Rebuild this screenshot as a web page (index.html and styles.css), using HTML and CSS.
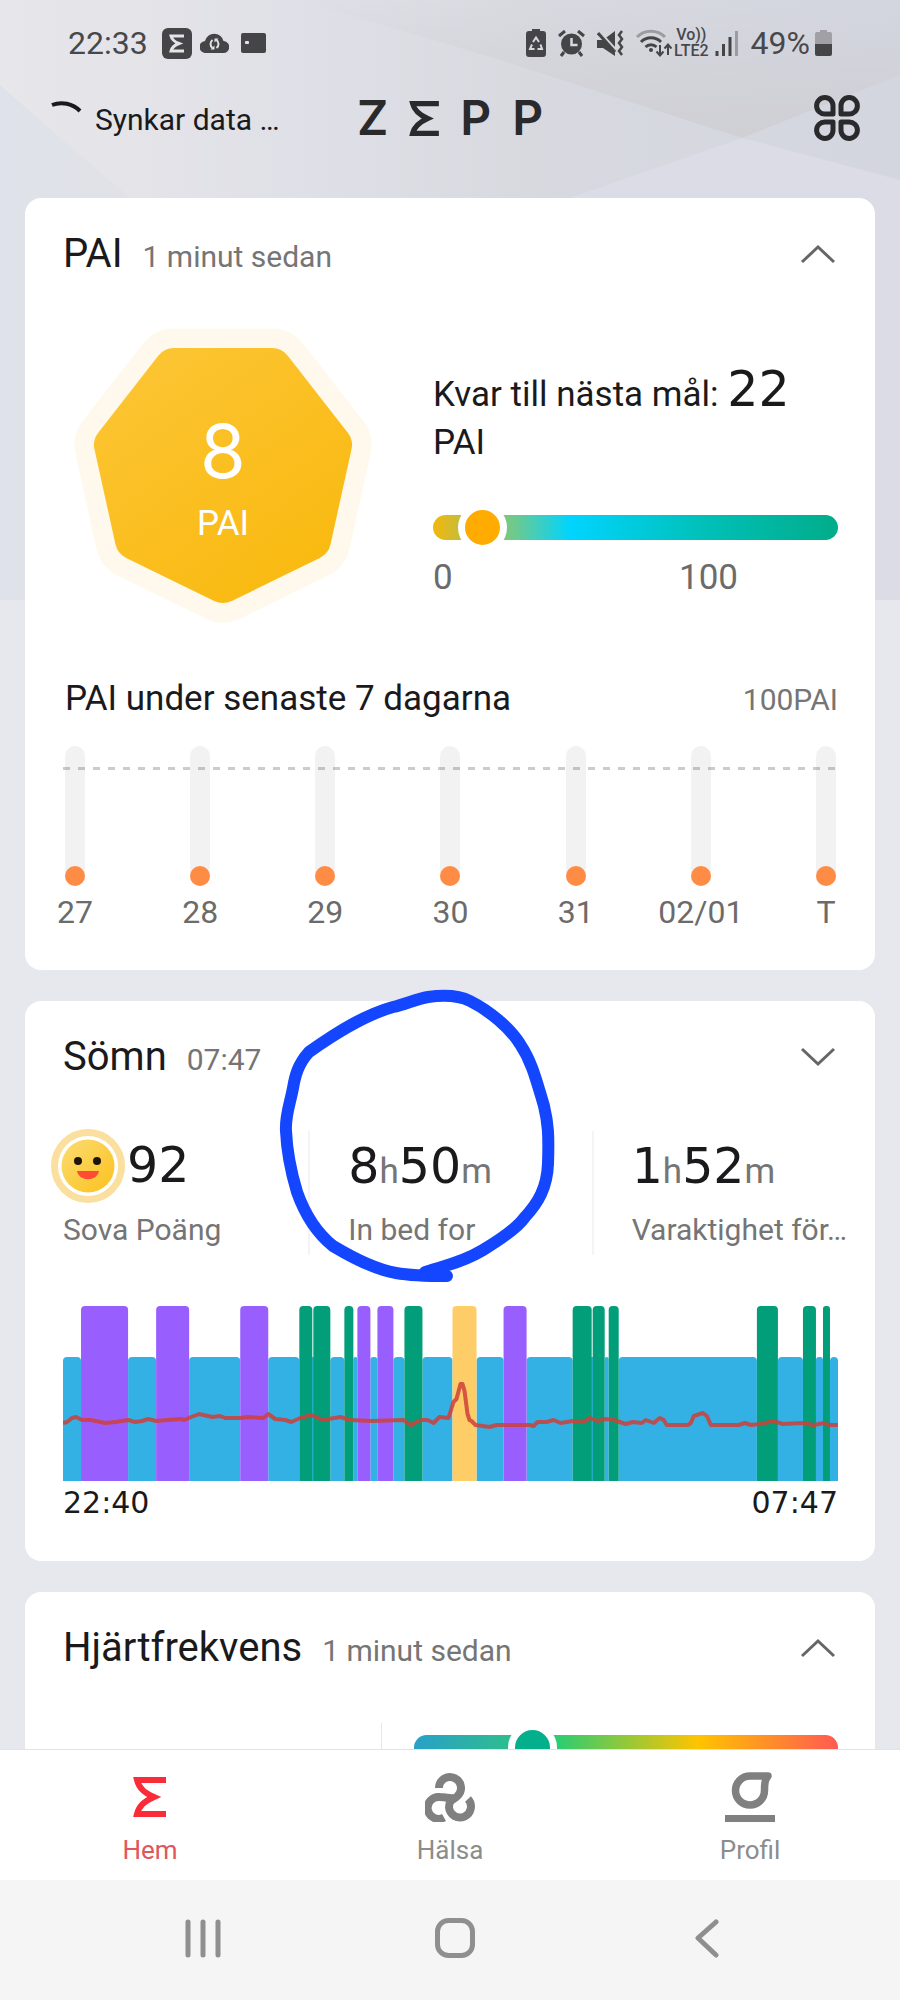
FILE: index.html
```
<!DOCTYPE html>
<html lang="sv">
<head>
    <meta charset="UTF-8">
    <meta name="viewport" content="width=device-width, initial-scale=1.0">
    <title>Zepp</title>
    <link rel="stylesheet" href="styles.css">
</head>
<body>
    <svg class="backdrop" viewBox="0 0 900 600" preserveAspectRatio="none" aria-hidden="true">
        <defs>
            <linearGradient id="sky" x1="0" y1="0" x2="1" y2="0">
                <stop offset="0" stop-color="#e7e7ea"/>
                <stop offset="0.35" stop-color="#dfdfe7"/>
                <stop offset="0.6" stop-color="#d8d9df"/>
                <stop offset="1" stop-color="#d3d6df"/>
            </linearGradient>
            <linearGradient id="shade" x1="0" y1="0" x2="0" y2="1">
                <stop offset="0" stop-color="#cfcfd4" stop-opacity="0"/>
                <stop offset="1" stop-color="#cfcfd4"/>
            </linearGradient>
            <linearGradient id="side" x1="0" y1="0" x2="1" y2="0">
                <stop offset="0" stop-color="#dfe2ea"/>
                <stop offset="1" stop-color="#e1e2e8"/>
            </linearGradient>
        </defs>
        <rect width="900" height="600" fill="url(#sky)"/>
        <polygon points="0,85 130,198 130,600 0,600" fill="url(#side)"/>
        <polygon points="300,0 900,0 900,75 742,138 500,60" fill="url(#shade)"/>
        <polygon points="742,138 900,180 900,600 570,600 570,198" fill="#dcdce7"/>
    </svg>

    <div class="status-bar">
        <div class="status-group">
            <span class="clock">22:33</span>
            <svg class="icon-app" width="30" height="31" viewBox="0 0 30 31">
                <rect width="30" height="31" rx="6" fill="#454548"/>
                <path d="M22 8H9c1 4 4 6 8 7.500c-4 1.500-7 3.500-8 7.500h13" fill="none" stroke="#e3e3e8" stroke-width="3"/>
            </svg>
            <svg width="29" height="20" viewBox="0 0 29 20">
                <path d="M6 20a6 6 0 0 1-1-12a9.500 9.500 0 0 1 18.500 0a6 6 0 0 1-.5 12z" fill="#454548"/>
                <path d="M12.500 7a5 5 0 0 0 0 8M16.500 7a5 5 0 0 1 0 8" fill="none" stroke="#e3e3e8" stroke-width="2"/>
                <path d="M10.500 16.500h4v-4zM18.500 5.500h-4v4z" fill="#e3e3e8"/>
            </svg>
            <svg class="icon-card" width="25" height="20" viewBox="0 0 25 20">
                <rect width="25" height="20" rx="2" fill="#454548"/>
                <rect x="4" y="8" width="4" height="3" rx="1" fill="#e3e3e8"/>
            </svg>
        </div>
        <div class="status-group status-right">
            <svg width="20" height="28" viewBox="0 0 20 28">
                <path d="M6 0h8v2h3a3 3 0 0 1 3 3v20a3 3 0 0 1-3 3H3a3 3 0 0 1-3-3V5a3 3 0 0 1 3-3h3z" fill="#454548"/>
                <path d="M7 13l3-4.500l3 4.500M14.500 15.500l1.500 4.500h-4.500M8.500 20H4l2-4.500" fill="none" stroke="#d8d9de" stroke-width="2"/>
            </svg>
            <svg width="27" height="27" viewBox="0 0 27 27">
                <circle cx="13.500" cy="14" r="10.500" fill="#454548"/>
                <path d="M1 6l6-5M26 6l-6-5M6 22l-3 4M21 22l3 4" stroke="#454548" stroke-width="3"/>
                <path d="M13.500 8v7h6" fill="none" stroke="#d8d9de" stroke-width="2.500"/>
            </svg>
            <svg width="27" height="27" viewBox="0 0 27 27">
                <path d="M0 10h6L18 1v25L6 18H0z" fill="#454548"/>
                <path d="M0 0l20 22" stroke="#d4d5da" stroke-width="4"/>
                <path d="M1 3l17 19" stroke="#454548" stroke-width="3"/>
                <path d="M25 1l-3 4l3 4l-3 4l3 4l-3 4l3 4" fill="none" stroke="#454548" stroke-width="2.500"/>
            </svg>
            <svg width="36" height="28" viewBox="0 0 36 28">
                <path d="M1 8a20 20 0 0 1 28 0" fill="none" stroke="#9b9ba0" stroke-width="3"/>
                <path d="M5 13a14 14 0 0 1 20 0M9.500 18a8 8 0 0 1 11 0" fill="none" stroke="#454548" stroke-width="3"/>
                <circle cx="15" cy="21" r="2" fill="#454548"/>
                <path d="M24 16v10M20.500 22.500l3.500 4l3.500-4M32 26V16M28.500 19.500l3.500-4l3.500 4" fill="none" stroke="#454548" stroke-width="2"/>
            </svg>
            <span class="volte"><span>Vo))</span><span>LTE2</span></span>
            <svg class="icon-signal" width="24" height="25" viewBox="0 0 24 25">
                <path d="M2 25v-5M8.500 25V13M15 25V6" stroke="#454548" stroke-width="3"/>
                <path d="M21.500 25V0" stroke="#9b9ba0" stroke-width="3"/>
            </svg>
            <span class="battery-text">49%</span>
            <svg width="17" height="26" viewBox="0 0 17 26">
                <path d="M5 0h7v2h3a2 2 0 0 1 2 2v10H0V4a2 2 0 0 1 2-2h3z" fill="#a0a0a6"/>
                <path d="M0 14h17v10a2 2 0 0 1-2 2H2a2 2 0 0 1-2-2z" fill="#454548"/>
            </svg>
        </div>
    </div>

    <header class="top">
        <div class="sync">
            <svg width="31" height="40" viewBox="0 0 31 40">
                <path d="M1 5a26 26 0 0 1 28 6" fill="none" stroke="#1a1a1c" stroke-width="4"/>
            </svg>
            <span>Synkar data …</span>
        </div>
        <div class="logo">
            <span>Z</span>
            <svg width="30" height="35" viewBox="0 0 34 40" role="img" aria-label="Σ">
                <path d="M34 3H4c2 8 7 12.500 17 17c-10 4.500-15 9-17 17h30" fill="none" stroke="#2a2a2c" stroke-width="6"/>
            </svg>
            <span>P</span>
            <span>P</span>
        </div>
        <button class="menu-button" aria-label="Meny">
            <svg width="46" height="46" viewBox="0 0 46 46" fill="none" stroke="#2a2a2c" stroke-width="5" stroke-linejoin="round">
                <path d="M19 19h-8a8.200 8.200 0 1 1 8-8z"/>
                <path d="M27 19v-8a8.200 8.200 0 1 1 8 8z"/>
                <path d="M19 27v8a8.200 8.200 0 1 1-8-8z"/>
                <path d="M27 27h8a8.200 8.200 0 1 1-8 8z"/>
            </svg>
        </button>
    </header>

    <main>
        <section class="card pai-card">
            <div class="card-header">
                <h2>PAI</h2>
                <span class="time">1 minut sedan</span>
                <button class="toggle" aria-label="Dölj PAI">
                    <svg width="36" height="20" viewBox="0 0 36 20"><path d="M2 18L18 3l16 15"/></svg>
                </button>
            </div>

            <div class="pai-row">
                <div class="pai-badge">
                    <svg width="300" height="300" viewBox="0 0 300 300" aria-hidden="true">
                        <defs>
                            <linearGradient id="gold" gradientUnits="userSpaceOnUse" x1="60" y1="30" x2="230" y2="270">
                                <stop offset="0" stop-color="#fcc534"/>
                                <stop offset="1" stop-color="#f9b90f"/>
                            </linearGradient>
                        </defs>
                        <polygon points="150,263 62,220 41,125 101,48 199,48 259,125 238,220" fill="#fef9ec" stroke="#fef9ec" stroke-width="79" stroke-linejoin="round"/>
                        <polygon points="150,263 62,220 41,125 101,48 199,48 259,125 238,220" fill="url(#gold)" stroke="url(#gold)" stroke-width="40" stroke-linejoin="round"/>
                    </svg>
                    <div class="pai-score">
                        <strong>8</strong>
                        <span>PAI</span>
                    </div>
                </div>
                <div class="pai-goal">
                    <p>Kvar till nästa mål: <span class="number">22</span> PAI</p>
                    <input class="slider pai-slider" type="range" min="0" max="116" value="8" aria-label="PAI">
                    <div class="scale"><span>0</span><span>100</span></div>
                </div>
            </div>

            <div class="week-header">
                <h3>PAI under senaste 7 dagarna</h3>
                <span>100PAI</span>
            </div>
            <div class="week">
                <div class="day"><div class="bar"></div><span>27</span></div>
                <div class="day"><div class="bar"></div><span>28</span></div>
                <div class="day"><div class="bar"></div><span>29</span></div>
                <div class="day"><div class="bar"></div><span>30</span></div>
                <div class="day"><div class="bar"></div><span>31</span></div>
                <div class="day"><div class="bar"></div><span>02/01</span></div>
                <div class="day"><div class="bar"></div><span>T</span></div>
            </div>
        </section>

        <section class="card sleep-card">
            <div class="card-header">
                <h2>Sömn</h2>
                <span class="time">07:47</span>
                <button class="toggle" aria-label="Visa Sömn">
                    <svg width="36" height="20" viewBox="0 0 36 20"><path d="M2 2l16 15L34 2"/></svg>
                </button>
            </div>

            <div class="stats">
                <div class="stat">
                    <div class="value score">
                        <svg width="74" height="74" viewBox="0 0 74 74" aria-hidden="true">
                            <defs>
                                <linearGradient id="face" x1="0" y1="0" x2="1" y2="1">
                                    <stop offset="0" stop-color="#fbdc72"/>
                                    <stop offset="1" stop-color="#fcc11d"/>
                                </linearGradient>
                            </defs>
                            <circle cx="37" cy="37" r="33.500" fill="#fff" stroke="#fadf9f" stroke-width="7"/>
                            <circle cx="37" cy="37" r="26.500" fill="url(#face)"/>
                            <circle cx="27" cy="32" r="4" fill="#1f1408"/>
                            <circle cx="46" cy="32" r="4" fill="#1f1408"/>
                            <path d="M26 42h22c-2 11-20 11-22 0z" fill="#ff4b33"/>
                        </svg>
                        <span class="number">92</span>
                    </div>
                    <div class="label">Sova Poäng</div>
                </div>
                <div class="stat">
                    <div class="value"><span class="number">8</span>h<span class="number">50</span>m</div>
                    <div class="label">In bed for</div>
                    <svg class="pen-circle" width="280" height="310" viewBox="0 0 280 310" aria-hidden="true">
                        <path d="M147 288C160 283 180 281 205 266C225 254 240 243 247 233C260 219 269 204 270 180C271 150 270 139 266 122C258 95 254 78 242 60C232 44 212 27 192 17C180 11 165 11 150 13C138 15 128 20 115 23C90 30 65 44 31 68C20 80 17 92 15 104C12 120 7 132 8 147C9 170 13 188 19 208C25 225 35 246 55 262C75 274 100 286 118 289C135 292 150 292 169 292"/>
                    </svg>
                </div>
                <div class="stat">
                    <div class="value"><span class="number">1</span>h<span class="number">52</span>m</div>
                    <div class="label">Varaktighet för…</div>
                </div>
            </div>

            <svg class="sleep-chart" viewBox="0 0 774 175" preserveAspectRatio="none" role="img" aria-label="Sömnstadier">
                <g fill="#33b1e4">
                    <rect x="0" y="51" width="18" height="140" rx="4"/>
                    <rect x="65" y="51" width="28" height="140" rx="4"/>
                    <rect x="126" y="51" width="51" height="140" rx="4"/>
                    <rect x="205" y="51" width="31" height="140" rx="4"/>
                    <rect x="247" y="51" width="5" height="140"/>
                    <rect x="267" y="51" width="14" height="140" rx="4"/>
                    <rect x="290" y="51" width="4" height="140" rx="2"/>
                    <rect x="307" y="51" width="7" height="140" rx="3"/>
                    <rect x="330" y="51" width="11" height="140" rx="4"/>
                    <rect x="359" y="51" width="30" height="140" rx="4"/>
                    <rect x="413" y="51" width="27" height="140" rx="4"/>
                    <rect x="463" y="51" width="46" height="140" rx="4"/>
                    <rect x="526" y="51" width="5" height="140"/>
                    <rect x="541" y="51" width="4" height="140" rx="2"/>
                    <rect x="555" y="51" width="138" height="140" rx="4"/>
                    <rect x="714" y="51" width="25" height="140" rx="4"/>
                    <rect x="752" y="51" width="7" height="140" rx="3"/>
                    <rect x="766" y="51" width="8" height="140" rx="4"/>
                </g>
                <g fill="#995ffe">
                    <rect x="18" y="0" width="47" height="190" rx="4"/>
                    <rect x="93" y="0" width="33" height="190" rx="4"/>
                    <rect x="177" y="0" width="28" height="190" rx="4"/>
                    <rect x="294" y="0" width="13" height="190" rx="4"/>
                    <rect x="314" y="0" width="16" height="190" rx="4"/>
                    <rect x="440" y="0" width="23" height="190" rx="4"/>
                </g>
                <g fill="#029e7a">
                    <rect x="236" y="0" width="13" height="190" rx="4"/>
                    <rect x="250" y="0" width="17" height="190" rx="4"/>
                    <rect x="281" y="0" width="9" height="190" rx="4"/>
                    <rect x="341" y="0" width="18" height="190" rx="4"/>
                    <rect x="509" y="0" width="19" height="190" rx="4"/>
                    <rect x="529" y="0" width="12" height="190" rx="4"/>
                    <rect x="545" y="0" width="10" height="190" rx="4"/>
                    <rect x="693" y="0" width="21" height="190" rx="4"/>
                    <rect x="739" y="0" width="13" height="190" rx="4"/>
                    <rect x="759" y="0" width="7" height="190" rx="3"/>
                </g>
                <rect x="389" y="0" width="24" height="190" rx="4" fill="#fecd67"/>
                <polyline class="pulse" points="0,117 4,116 9,112 13,111 19,114 28,114 42,117 52,116 65,114 72,116 79,115 85,113 93,115 105,114 118,113 121,114 128,111 136,108 149,111 157,110 162,112 177,112 184,111 200,112 205,108 212,113 222,114 228,116 237,112 248,109 257,113 265,113 277,111 287,114 308,115 340,114 344,117 348,119 353,116 358,114 364,114 370,117 376,111 385,112 390,96 393,93 397,78 399,78 401,85 404,108 406,114 408,115 412,119 426,121 433,119 466,119 470,120 474,116 483,116 490,114 497,117 509,115 520,116 526,112 534,115 541,113 550,114 562,118 569,116 578,117 582,114 590,117 596,112 600,114 603,119 624,119 627,117 630,110 639,107 643,110 647,119 675,119 681,117 687,119 697,118 709,115 719,118 738,117 750,119 760,117 765,119 774,119"/>
            </svg>
            <div class="sleep-times"><span>22:40</span><span>07:47</span></div>
        </section>

        <section class="card heart-card">
            <div class="card-header">
                <h2>Hjärtfrekvens</h2>
                <span class="time">1 minut sedan</span>
                <button class="toggle" aria-label="Dölj Hjärtfrekvens">
                    <svg width="36" height="20" viewBox="0 0 36 20"><path d="M2 18L18 3l16 15"/></svg>
                </button>
            </div>
            <div class="heart-row">
                <div class="heart-zone">
                    <input class="slider heart-slider" type="range" min="0" max="100" value="25" aria-label="Hjärtfrekvens">
                </div>
            </div>
        </section>
    </main>

    <nav class="tabs">
        <a class="active" href="#hem">
            <svg width="50" height="50" viewBox="0 0 50 50">
                <path d="M41 8H12c2 8 7 12.500 17 17c-10 4.500-15 9-17 17h29" fill="none" stroke="currentColor" stroke-width="6"/>
            </svg>
            <span>Hem</span>
        </a>
        <a href="#halsa">
            <svg width="50" height="50" viewBox="0 0 50 50" fill="none" stroke="#808080" stroke-width="8">
                <path d="M14 16a11 11 0 1 1 18 8.500c-5 4-8 4-8 11a11 11 0 1 0 19-8.500"/>
                <path d="M29 26c-5 1-7-1-14-1a11 11 0 1 0 4 20.500"/>
            </svg>
            <span>Hälsa</span>
        </a>
        <a href="#profil">
            <svg width="50" height="50" viewBox="0 0 50 50">
                <path d="M25 4h18c-3 4-3.500 7-3.500 14.500A14.500 14.500 0 1 1 25 4z" fill="none" stroke="#808080" stroke-width="7.500" stroke-linejoin="round"/>
                <rect y="43" width="50" height="7" fill="#808080"/>
            </svg>
            <span>Profil</span>
        </a>
    </nav>

    <div class="system-bar">
        <button aria-label="Senaste">
            <svg width="40" height="40" viewBox="0 0 40 40"><path d="M5 4v33M20 4v33M35 4v33"/></svg>
        </button>
        <button aria-label="Start">
            <svg width="40" height="40" viewBox="0 0 40 40"><rect x="2.500" y="2.500" width="35" height="35" rx="11"/></svg>
        </button>
        <button aria-label="Tillbaka">
            <svg width="40" height="40" viewBox="0 0 40 40"><path d="M29 4L11 20l18 17"/></svg>
        </button>
    </div>
</body>
</html>
```
FILE: styles.css
```
* {
    box-sizing: border-box;
}
body {
    font-family: Roboto, sans-serif;
    margin: 0;
    height: 100vh;
    display: flex;
    flex-direction: column;
    background-color: #e7e8ed;
    color: #1a1a1c;
    overflow: hidden;
}
h2, h3, p {
    margin: 0;
    font-weight: 400;
}
button {
    padding: 0;
    border: none;
    background: none;
    cursor: pointer;
}
svg {
    display: block;
    flex-shrink: 0;
}
.backdrop {
    position: absolute;
    top: 0;
    left: 0;
    z-index: -1;
    width: 100%;
    height: 600px;
}

/* Status bar */
.status-bar {
    display: flex;
    justify-content: space-between;
    align-items: center;
    height: 86px;
    padding: 0 68px;
    color: #48484b;
    font-size: 32px;
}
.status-group {
    display: flex;
    align-items: center;
    gap: 8px;
}
.icon-app {
    margin-left: 6px;
}
.icon-card {
    margin-left: 4px;
}
.status-right {
    gap: 12px;
}
.volte {
    display: flex;
    flex-direction: column;
    align-items: center;
    margin-left: -10px;
    font-size: 16px;
    font-weight: 500;
    line-height: 16px;
}
.icon-signal {
    margin-left: -6px;
}
.battery-text {
    margin-right: -7px;
}

/* Header */
.top {
    display: grid;
    grid-template-columns: 1fr auto 1fr;
    align-items: center;
    height: 64px;
    margin: 0 40px 48px;
}
.sync {
    display: flex;
    align-items: center;
    gap: 13px;
    padding: 4px 0 0 11px;
    font-size: 30px;
    line-height: 40px;
}
.logo {
    display: flex;
    align-items: center;
    gap: 21px;
    font-family: Inter, sans-serif;
    font-size: 48px;
    font-weight: 600;
    line-height: 48px;
    color: #2a2a2c;
}
.menu-button {
    justify-self: end;
}

/* Cards */
main {
    flex: 1;
    min-height: 0;
    overflow: hidden;
    padding: 0 25px;
}
.card {
    margin-bottom: 31px;
    padding: 32px 37px 40px 38px;
    background-color: #fff;
    border-radius: 16px;
}
.card-header {
    display: flex;
    align-items: baseline;
    gap: 20px;
}
.card-header h2 {
    font-size: 40px;
    line-height: 48px;
}
.time {
    color: #757575;
    font-size: 30px;
}
.toggle {
    align-self: center;
    margin: 0 2px 0 auto;
}
.toggle path {
    fill: none;
    stroke: #666;
    stroke-width: 3;
}
.number {
    font-family: "DejaVu Sans", sans-serif;
    font-size: 49px;
    line-height: 0;
    color: #1a1a1c;
}

/* PAI */
.pai-row {
    display: flex;
    gap: 60px;
    margin-top: 42px;
    padding-left: 10px;
}
.pai-badge {
    position: relative;
}
.pai-badge svg {
    overflow: visible;
}
.pai-score {
    position: absolute;
    inset: 0;
    display: flex;
    flex-direction: column;
    align-items: center;
    justify-content: center;
    gap: 8px;
    padding-top: 10px;
    color: #fff;
    font-size: 35px;
    line-height: 40px;
}
.pai-score strong {
    font-family: Inter, sans-serif;
    font-size: 74px;
    font-weight: 400;
    line-height: 90px;
}
.pai-goal {
    flex: 1;
    padding-top: 51px;
    font-size: 35px;
    line-height: 48px;
}
.slider {
    -webkit-appearance: none;
    appearance: none;
    display: block;
    width: 100%;
    height: 49px;
    margin: 0;
    background: none;
}
.slider::-webkit-slider-runnable-track {
    height: 25px;
    border-radius: 13px;
}
.slider::-webkit-slider-thumb {
    -webkit-appearance: none;
    width: 49px;
    height: 49px;
    margin-top: -12px;
    border: 7px solid #fff;
    border-radius: 50%;
}
.pai-slider {
    margin-top: 36px;
}
.pai-slider::-webkit-slider-runnable-track {
    background: linear-gradient(to right, #f3b70c, #6fc98d 20%, #00d4ff 34%, #00c0b8 67%, #00ad8a);
}
.pai-slider::-webkit-slider-thumb {
    background-color: #ffab00;
}
.scale {
    display: flex;
    justify-content: space-between;
    margin-top: 6px;
    padding-right: 100px;
    color: #6b6b6b;
    line-height: 40px;
}
.week-header {
    display: flex;
    justify-content: space-between;
    align-items: baseline;
    margin-top: 59px;
    padding-left: 2px;
}
.week-header h3 {
    font-size: 35px;
    line-height: 40px;
}
.week-header span {
    color: #757575;
    font-size: 30px;
}
.week {
    position: relative;
    display: flex;
    justify-content: space-between;
    margin-top: 27px;
    padding: 0 2px;
}
.week::after {
    content: "";
    position: absolute;
    top: 21px;
    left: 0;
    right: 0;
    height: 3px;
    background: repeating-linear-gradient(to right, rgba(0, 0, 0, 0.2) 0 7px, transparent 7px 15px);
}
.day {
    display: flex;
    flex-direction: column;
    align-items: center;
    width: 20px;
    color: #6b6b6b;
    font-size: 32px;
    line-height: 36px;
    white-space: nowrap;
}
.bar {
    display: flex;
    align-items: flex-end;
    width: 20px;
    height: 140px;
    margin-bottom: 8px;
    border-radius: 10px;
    background-color: #f2f2f2;
}
.bar::after {
    content: "";
    width: 20px;
    height: 20px;
    border-radius: 50%;
    background-color: #ff8c45;
}

/* Sleep */
.stats {
    display: grid;
    grid-template-columns: repeat(3, 1fr);
    margin: 50px -37px 0 -38px;
}
.stat {
    position: relative;
    height: 124px;
    padding: 5px 26px 0 38px;
}
.stat + .stat {
    border-left: 2px solid #f4f4f4;
}
.value {
    color: #757575;
    font-size: 35px;
    line-height: 72px;
}
.score {
    display: flex;
    align-items: center;
    gap: 2px;
    height: 60px;
    margin: 0 0 12px -12px;
}
.score .number {
    line-height: 60px;
}
.label {
    padding-top: 4px;
    color: #757575;
    font-size: 30px;
    line-height: 36px;
    white-space: nowrap;
}
/* hand-drawn mark over the card */
.pen-circle {
    position: absolute;
    top: -147px;
    left: -32px;
    z-index: 1;
    pointer-events: none;
}
.pen-circle path {
    fill: none;
    stroke: #1446ff;
    stroke-width: 12;
    stroke-linecap: round;
    stroke-linejoin: round;
}
.sleep-chart {
    width: 100%;
    height: 175px;
    margin-top: 51px;
}
.pulse {
    fill: none;
    stroke: #cf3f3a;
    stroke-width: 4;
    stroke-linejoin: round;
    opacity: 0.85;
}
.sleep-times {
    display: flex;
    justify-content: space-between;
    margin-top: 4px;
    font-family: "DejaVu Sans", sans-serif;
    font-size: 30px;
    line-height: 36px;
}

/* Heart rate */
.heart-row {
    display: flex;
    justify-content: flex-end;
    margin-top: 51px;
}
.heart-zone {
    width: 59%;
    height: 124px;
    padding-left: 32px;
    border-left: 1px solid #e8e8e8;
}
.heart-slider::-webkit-slider-runnable-track {
    background: linear-gradient(to right, #2aa0c8, #2ecc71 34%, #ffc400 67%, #ff5a52);
}
.heart-slider::-webkit-slider-thumb {
    background-color: #04b08c;
}

/* Bottom navigation */
.tabs {
    display: grid;
    grid-template-columns: repeat(3, 1fr);
    height: 131px;
    padding-top: 22px;
    border-top: 1px solid #e3e3e5;
    background-color: #fff;
}
.tabs a {
    display: flex;
    flex-direction: column;
    align-items: center;
    gap: 13px;
    color: #8c8c8c;
    font-size: 26px;
    line-height: 30px;
    text-decoration: none;
}
.tabs .active {
    color: #e0565a;
}
.tabs .active svg {
    color: #fa2c37;
}
.system-bar {
    display: grid;
    grid-template-columns: repeat(3, 1fr);
    place-items: center;
    height: 120px;
    padding: 0 67px 4px 77px;
    background-color: #f5f5f5;
}
.system-bar svg {
    fill: none;
    stroke: #8f8f8f;
    stroke-width: 5;
    stroke-linecap: round;
    stroke-linejoin: round;
}
```
